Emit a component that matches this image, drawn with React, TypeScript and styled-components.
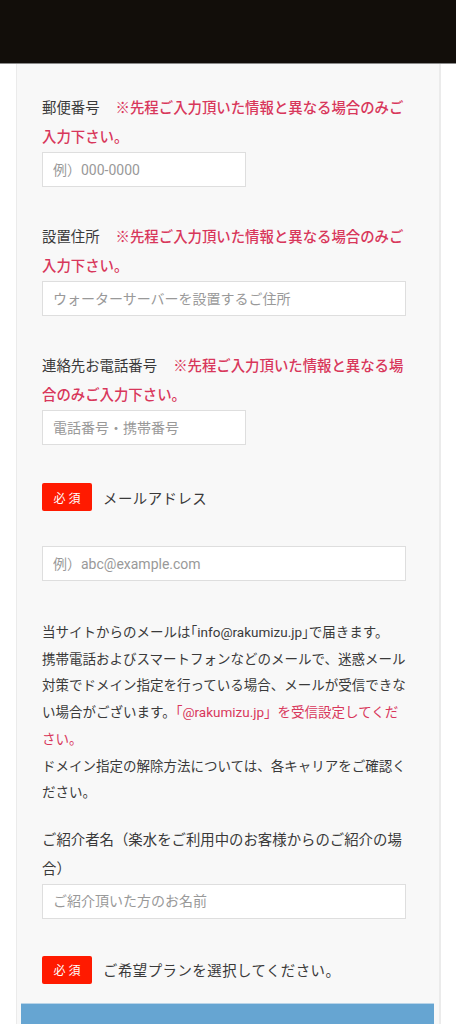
import React from 'react'
import styled, { createGlobalStyle } from 'styled-components'

const GlobalStyle = createGlobalStyle`
    html, body {
        margin: 0;
        padding: 0;
        background: #ffffff;
    }
    body {
        font-family: Roboto, "Noto Sans CJK JP", "Noto Sans", sans-serif;
        color: #3a3a3a;
    }
`

const colors = {
  text: '#3a3a3a',
  red: '#d8375b',
  badge: '#ff1a00',
  border: '#dedede',
  card: '#f8f8f8',
  blue: '#66a5d2',
}

const Header = styled.header`
    height: 64px;
    background: #120e0a;
    border-bottom: 1px solid #8a8a8a;
    box-sizing: border-box;
`

const Card = styled.main`
    margin: 0 15px 0 16px;
    background: ${colors.card};
    border-left: 1px solid #ebebeb;
    border-right: 2px solid #ebebeb;
    padding: 30px 0 0;
    height: 960px;
    box-sizing: border-box;
    display: flex;
    flex-direction: column;
`

const Inner = styled.div`
    padding: 0 33px 0 25px;
    display: flex;
    flex-direction: column;
`

const Field = styled.div<{ $gap?: number }>`
    display: flex;
    flex-direction: column;
    margin-bottom: ${p => p.$gap ?? 36}px;
`

const Label = styled.p`
    margin: 0;
    font-size: 14.4px;
    line-height: 29px;
    color: ${colors.text};
`

const Note = styled.span`
    color: ${colors.red};
    font-weight: 500;
    margin-left: 16px;
`

const Input = styled.input<{ $full?: boolean }>`
    width: ${p => (p.$full ? '364px' : '204px')};
    height: 35px;
    box-sizing: border-box;
    border: 1px solid ${colors.border};
    background: #ffffff;
    padding: 0 10px;
    font-family: Roboto, "Noto Sans CJK JP", sans-serif;
    font-size: 14px;
    color: #333;
    outline: none;

    &::placeholder {
        color: #999999;
    }
`

const RequiredRow = styled.div<{ $gap: number }>`
    display: flex;
    align-items: center;
    gap: 11px;
    margin-bottom: ${p => p.$gap}px;
`

const Badge = styled.span`
    display: inline-flex;
    align-items: center;
    justify-content: center;
    width: 50px;
    height: 28px;
    border-radius: 2px;
    background: ${colors.badge};
    color: #ffffff;
    font-size: 12px;
    letter-spacing: 3px;
    text-indent: 3px;
`

const RowText = styled.span`
    font-size: 14.4px;
    color: ${colors.text};
    letter-spacing: 0.5px;
`

const Notice = styled.p`
    margin: 0 0 20px;
    font-size: 13.5px;
    line-height: 26.7px;
    color: ${colors.text};
`

const RedText = styled.span`
    color: ${colors.red};
`

const PlanBar = styled.div`
    margin: 19px 5px 0 4px;
    height: 40px;
    background: ${colors.blue};
    border-top: 1px solid #b9d4e8;
`

const App: React.FC = () => {
  return (
    <>
      <GlobalStyle />
      <Header />
      <Card>
        <Inner>
          <Field>
            <Label>郵便番号<Note>※先程ご入力頂いた情報と異なる場合のみご入力下さい。</Note></Label>
            <Input placeholder="例）000-0000" />
          </Field>
          <Field>
            <Label>設置住所<Note>※先程ご入力頂いた情報と異なる場合のみご入力下さい。</Note></Label>
            <Input $full placeholder="ウォーターサーバーを設置するご住所" />
          </Field>
          <Field $gap={38}>
            <Label>連絡先お電話番号<Note>※先程ご入力頂いた情報と異なる場合のみご入力下さい。</Note></Label>
            <Input placeholder="電話番号・携帯番号" />
          </Field>
          <RequiredRow $gap={35}>
            <Badge>必須</Badge>
            <RowText>メールアドレス</RowText>
          </RequiredRow>
          <Field $gap={38}>
            <Input $full placeholder="例）abc@example.com" />
          </Field>
          <Notice>
            当サイトからのメールは｢info@rakumizu.jp｣で届きます。<br />
            携帯電話およびスマートフォンなどのメールで、迷惑メール対策でドメイン指定を行っている場合、メールが受信できない場合がございます。<RedText>「@rakumizu.jp」を受信設定してください。</RedText><br />
            ドメイン指定の解除方法については、各キャリアをご確認ください。
          </Notice>
          <Field $gap={37}>
            <Label>ご紹介者名（楽水をご利用中のお客様からのご紹介の場合）</Label>
            <Input $full placeholder="ご紹介頂いた方のお名前" />
          </Field>
          <RequiredRow $gap={0}>
            <Badge>必須</Badge>
            <RowText>ご希望プランを選択してください。</RowText>
          </RequiredRow>
        </Inner>
        <PlanBar />
      </Card>
    </>
  )
}

export default App
